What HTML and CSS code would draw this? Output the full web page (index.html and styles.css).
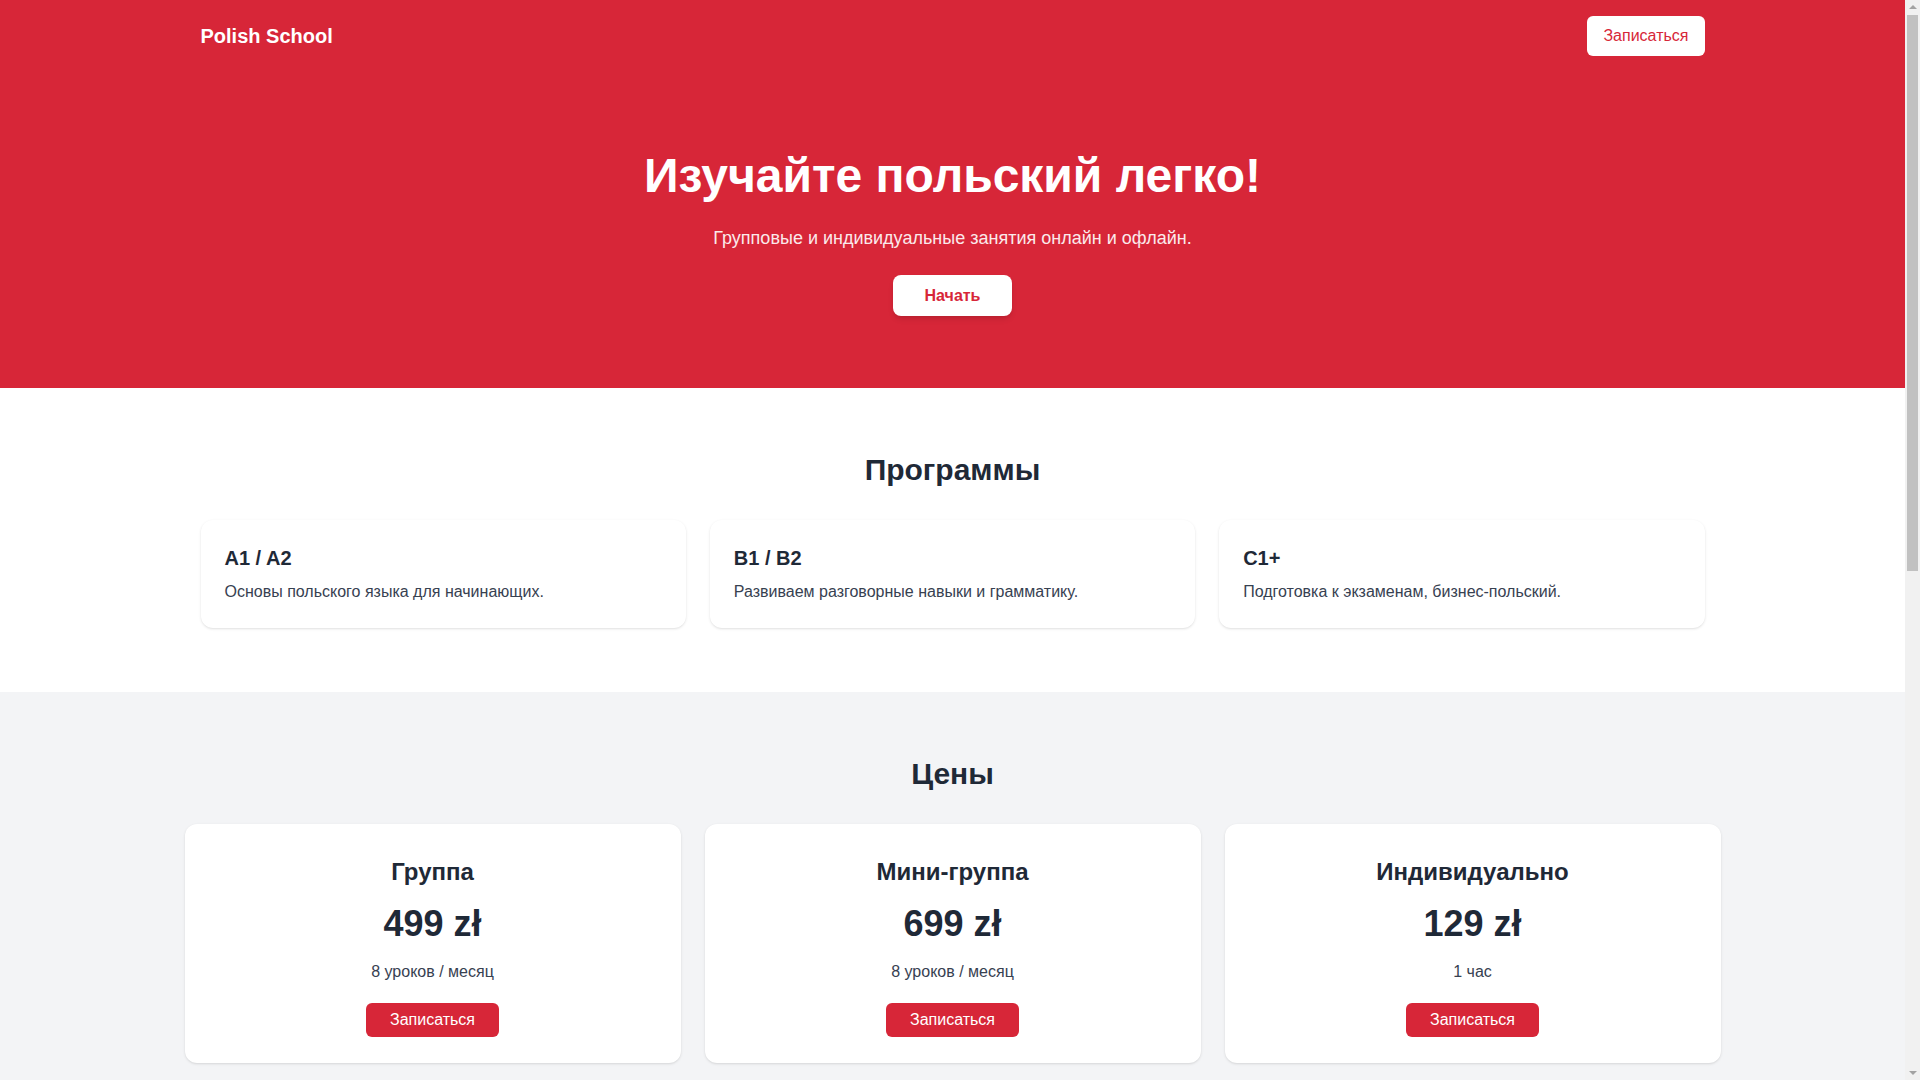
FILE: index.html
```html
<!DOCTYPE html>
<html lang="ru">
<head>
<meta charset="utf-8">
<title>Polish School</title>
<link rel="stylesheet" href="styles.css">
</head>
<body>
<div class="page">
<div class="top">
  <header class="container header-inner">
    <a class="logo" href="#">Polish School</a>
    <a class="btn-header" href="#">Записаться</a>
  </header>
  <section class="hero">
    <div class="container">
      <h1 class="hero-title">Изучайте польский легко!</h1>
      <p class="hero-sub">Групповые и индивидуальные занятия онлайн и офлайн.</p>
      <a class="btn-start" href="#">Начать</a>
    </div>
  </section>
</div>

<section class="programs">
  <div class="container">
    <h2 class="section-title">Программы</h2>
    <div class="grid3">
      <div class="prog-card">
        <h3 class="prog-title">A1 / A2</h3>
        <p class="prog-text">Основы польского языка для начинающих.</p>
      </div>
      <div class="prog-card">
        <h3 class="prog-title">B1 / B2</h3>
        <p class="prog-text">Развиваем разговорные навыки и грамматику.</p>
      </div>
      <div class="prog-card">
        <h3 class="prog-title">C1+</h3>
        <p class="prog-text">Подготовка к экзаменам, бизнес-польский.</p>
      </div>
    </div>
  </div>
</section>

<section class="pricing">
  <h2 class="section-title">Цены</h2>
  <div class="pricing-grid">
    <div class="price-card">
      <h3 class="price-name">Группа</h3>
      <div class="price-value">499 zł</div>
      <p class="price-note">8 уроков / месяц</p>
      <button class="btn-red">Записаться</button>
    </div>
    <div class="price-card">
      <h3 class="price-name">Мини-группа</h3>
      <div class="price-value">699 zł</div>
      <p class="price-note">8 уроков / месяц</p>
      <button class="btn-red">Записаться</button>
    </div>
    <div class="price-card">
      <h3 class="price-name">Индивидуально</h3>
      <div class="price-value">129 zł</div>
      <p class="price-note">1 час</p>
      <button class="btn-red">Записаться</button>
    </div>
  </div>
</section>

<section class="reviews">
  <div class="container">
    <h2 class="section-title">Отзывы</h2>
    <div class="grid3">
      <div class="prog-card">
        <p class="prog-text">«Отличные преподаватели, за полгода заговорила по-польски!»</p>
        <p class="review-author">— Анна</p>
      </div>
      <div class="prog-card">
        <p class="prog-text">«Удобное расписание и интересные материалы.»</p>
        <p class="review-author">— Игорь</p>
      </div>
      <div class="prog-card">
        <p class="prog-text">«Сдал экзамен B2 с первого раза.»</p>
        <p class="review-author">— Максим</p>
      </div>
    </div>
  </div>
</section>

<section class="contact">
  <div class="container contact-inner">
    <h2 class="section-title">Контакты</h2>
    <form class="contact-form">
      <input class="field" type="text" placeholder="Имя">
      <input class="field" type="email" placeholder="Email">
      <textarea class="field area" placeholder="Сообщение"></textarea>
      <button class="btn-red" type="button">Отправить</button>
    </form>
  </div>
</section>

<footer class="footer">© 2024 Polish School</footer>
</div>

<div class="fake-scrollbar" aria-hidden="true">
  <span class="sb-arrow sb-up"></span>
  <span class="sb-thumb"></span>
  <span class="sb-arrow sb-down"></span>
</div>
</body>
</html>
```

FILE: styles.css
```css
html, body {
  margin: 0;
}

body {
  font-family: "Liberation Sans", Arial, sans-serif;
  color: #1f2937;
  background: #ffffff;
}

.page {
  margin-right: 15px;
}

.container {
  max-width: 1536px;
  margin: 0 auto;
  padding: 0 16px;
  box-sizing: border-box;
}

.top {
  background: #d72638;
  color: #ffffff;
}

.header-inner {
  display: flex;
  justify-content: space-between;
  align-items: center;
  padding-top: 16px;
  padding-bottom: 16px;
}

.logo {
  font-size: 20px;
  line-height: 28px;
  font-weight: 700;
  color: #ffffff;
  text-decoration: none;
}

.btn-header {
  display: inline-block;
  background: #ffffff;
  color: #d72638;
  font-size: 16px;
  line-height: 24px;
  padding: 8px 16px;
  border-radius: 6px;
  text-decoration: none;
}

.hero {
  padding: 80px 0 72px;
  text-align: center;
}

.hero-title {
  margin: 0;
  font-size: 48px;
  line-height: 48px;
  font-weight: 700;
}

.hero-sub {
  margin: 24px 0 0;
  font-size: 18px;
  line-height: 28px;
  opacity: 0.9;
}

.btn-start {
  display: inline-block;
  margin-top: 23px;
  background: #ffffff;
  color: #d72638;
  font-weight: 700;
  font-size: 16px;
  line-height: 25px;
  padding: 8px 32px;
  border-radius: 8px;
  text-decoration: none;
  box-shadow: 0 4px 6px -1px rgba(0, 0, 0, 0.1), 0 2px 4px -2px rgba(0, 0, 0, 0.1);
}

.programs {
  padding: 64px 0;
}

.section-title {
  margin: 0 0 32px;
  font-size: 30px;
  line-height: 36px;
  font-weight: 700;
  text-align: center;
  color: #1f2937;
}

.grid3 {
  display: grid;
  grid-template-columns: repeat(3, 1fr);
  gap: 24px;
}

.prog-card {
  background: #ffffff;
  border-radius: 12px;
  padding: 24px;
  box-shadow: 0 1px 3px rgba(0, 0, 0, 0.1), 0 1px 2px -1px rgba(0, 0, 0, 0.1);
}

.prog-title {
  margin: 0 0 8px;
  font-size: 20px;
  line-height: 28px;
  font-weight: 700;
  color: #1f2937;
}

.prog-text {
  margin: 0;
  font-size: 16px;
  line-height: 24px;
  color: #374151;
}

.pricing {
  background: #f3f4f6;
  padding: 64px 0;
}

.pricing-grid {
  max-width: 1536px;
  margin: 0 auto;
  display: grid;
  grid-template-columns: repeat(3, 1fr);
  gap: 24px;
}

.price-card {
  background: #ffffff;
  border-radius: 12px;
  padding: 32px 32px 26px;
  text-align: center;
  box-shadow: 0 1px 3px rgba(0, 0, 0, 0.1), 0 1px 2px -1px rgba(0, 0, 0, 0.1);
}

.price-name {
  margin: 0;
  font-size: 24px;
  line-height: 32px;
  font-weight: 700;
  color: #1f2937;
}

.price-value {
  margin-top: 16px;
  font-size: 36px;
  line-height: 40px;
  font-weight: 700;
  color: #1f2937;
}

.price-note {
  margin: 16px 0 0;
  font-size: 16px;
  line-height: 24px;
  color: #374151;
}

.btn-red {
  margin-top: 19px;
  background: #d72638;
  color: #ffffff;
  border: none;
  border-radius: 6px;
  padding: 8px 24px;
  font-family: "Liberation Sans", Arial, sans-serif;
  font-size: 16px;
  cursor: pointer;
}

.reviews {
  padding: 64px 0;
}

.review-author {
  margin: 12px 0 0;
  font-weight: 700;
  color: #1f2937;
}

.contact {
  background: #f3f4f6;
  padding: 64px 0;
}

.contact-inner {
  max-width: 640px;
}

.contact-form {
  display: flex;
  flex-direction: column;
  gap: 16px;
}

.field {
  font-family: "Liberation Sans", Arial, sans-serif;
  font-size: 16px;
  padding: 12px;
  border: 1px solid #d1d5db;
  border-radius: 6px;
  background: #ffffff;
}

.area {
  height: 160px;
  resize: none;
}

.contact-form .btn-red {
  margin-top: 0;
  align-self: center;
}

.footer {
  background: #d72638;
  color: #ffffff;
  text-align: center;
  padding: 24px 0;
  font-size: 14px;
}

/* visual stand-in for the browser scrollbar seen in the reference */
.fake-scrollbar {
  position: fixed;
  top: 0;
  right: 0;
  width: 15px;
  height: 100vh;
  background: #f1f1f1;
  display: flex;
  flex-direction: column;
  align-items: center;
}

.sb-arrow {
  display: block;
  width: 0;
  height: 0;
  border-left: 4px solid transparent;
  border-right: 4px solid transparent;
}

.sb-up {
  margin-top: 5px;
  border-bottom: 4px solid #a3a3a3;
}

.sb-down {
  margin-top: auto;
  margin-bottom: 5px;
  border-top: 4px solid #a3a3a3;
}

.sb-thumb {
  display: block;
  width: 11px;
  height: 556px;
  margin-top: 6px;
  background: #c1c1c1;
}
```
